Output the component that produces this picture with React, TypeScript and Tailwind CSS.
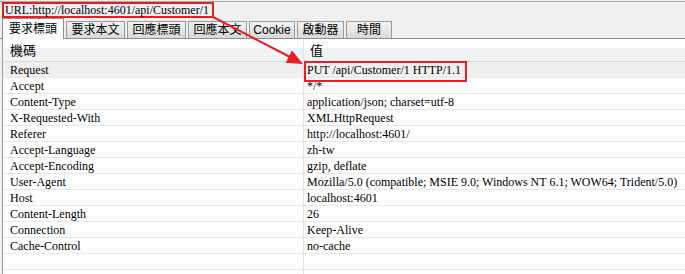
const TABS = [
  { label: "要求標頭", w: 62, active: true },
  { label: "要求本文", w: 59 },
  { label: "回應標頭", w: 59 },
  { label: "回應本文", w: 59 },
  { label: "Cookie", w: 46 },
  { label: "啟動器", w: 47 },
  { label: "時間", w: 46 },
] as const;

const ROWS: [string, string][] = [
  ["Request", "PUT /api/Customer/1 HTTP/1.1"],
  ["Accept", "*/*"],
  ["Content-Type", "application/json; charset=utf-8"],
  ["X-Requested-With", "XMLHttpRequest"],
  ["Referer", "http://localhost:4601/"],
  ["Accept-Language", "zh-tw"],
  ["Accept-Encoding", "gzip, deflate"],
  ["User-Agent", "Mozilla/5.0 (compatible; MSIE 9.0; Windows NT 6.1; WOW64; Trident/5.0)"],
  ["Host", "localhost:4601"],
  ["Content-Length", "26"],
  ["Connection", "Keep-Alive"],
  ["Cache-Control", "no-cache"],
  ["", ""],
  ["", ""],
];

const serif = "font-['Liberation_Serif','Noto_Sans_CJK_TC',serif]";
const sans = "font-['Liberation_Sans','Noto_Sans_CJK_TC',sans-serif]";

export default function App() {
  return (
    <div className="relative h-[274px] w-[685px] overflow-hidden bg-[#f0f0f0] text-black">
      {/* URL bar */}
      <div className="mt-px flex h-[18px] items-start border-t border-[#a9a9a9] pl-[2px]">
        <div className={`flex h-[16px] w-[212px] items-center border-2 border-[#e81d25] pl-[1px] text-[12px] leading-none ${serif}`}>
          URL:http://localhost:4601/api/Customer/1
        </div>
      </div>

      {/* Tabs */}
      <div className="flex h-[20px] items-end gap-[2px] border-b border-[#8f8f8f] pl-[2px]">
        {TABS.map((t) => (
          <div
            key={t.label}
            style={{ width: t.w }}
            className={[
              "flex items-center justify-center border border-b-0 text-[12px] leading-none",
              sans,
              t.active
                ? "relative -mb-px h-[21px] border-[#8f8f8f] bg-white"
                : "h-[17px] border-[#9a9a9a] bg-gradient-to-b from-[#f4f4f4] to-[#d9d9d9]",
            ].join(" ")}
          >
            {t.label}
          </div>
        ))}
      </div>

      {/* Header table */}
      <div className="ml-[2px] border-l border-[#a0a0a0] bg-white">
        <div className={`grid h-[23px] grid-cols-[301px_1fr] border-b border-[#d8d8d8] bg-gradient-to-b from-white from-40% to-[#f3f3f5] to-40% text-[13px] ${sans}`}>
          <div className="flex items-center border-r border-[#e2e2e2] pl-[7px] pt-[1px]">機碼</div>
          <div className="flex items-center pl-[6px] pt-[1px]">值</div>
        </div>
        {ROWS.map(([k, v], i) => (
          <div
            key={i}
            className={[
              "grid h-[16px] grid-cols-[301px_1fr] border-b border-[#e8e8e8] text-[12px] leading-none",
              serif,
              i === 0 ? "bg-[#efefef]" : "bg-white",
            ].join(" ")}
          >
            <div className="flex items-center border-r border-[#e2e2e2] pl-[7px] whitespace-nowrap">{k}</div>
            <div className="flex items-center pl-[3px] whitespace-nowrap">{v}</div>
          </div>
        ))}
      </div>

      {/* Annotation: box around request line */}
      <div className="absolute left-[304px] top-[61px] h-[21px] w-[163px] border-2 border-[#e81d25]" />

      {/* Annotation: arrow */}
      <svg className="absolute left-0 top-0" width="685" height="274" viewBox="0 0 685 274">
        <line x1="213" y1="17" x2="290" y2="57" stroke="#e81d25" strokeWidth="2" />
        <polygon points="303,64 285.6,62.8 292,50.4" fill="#e81d25" />
      </svg>
    </div>
  );
}
